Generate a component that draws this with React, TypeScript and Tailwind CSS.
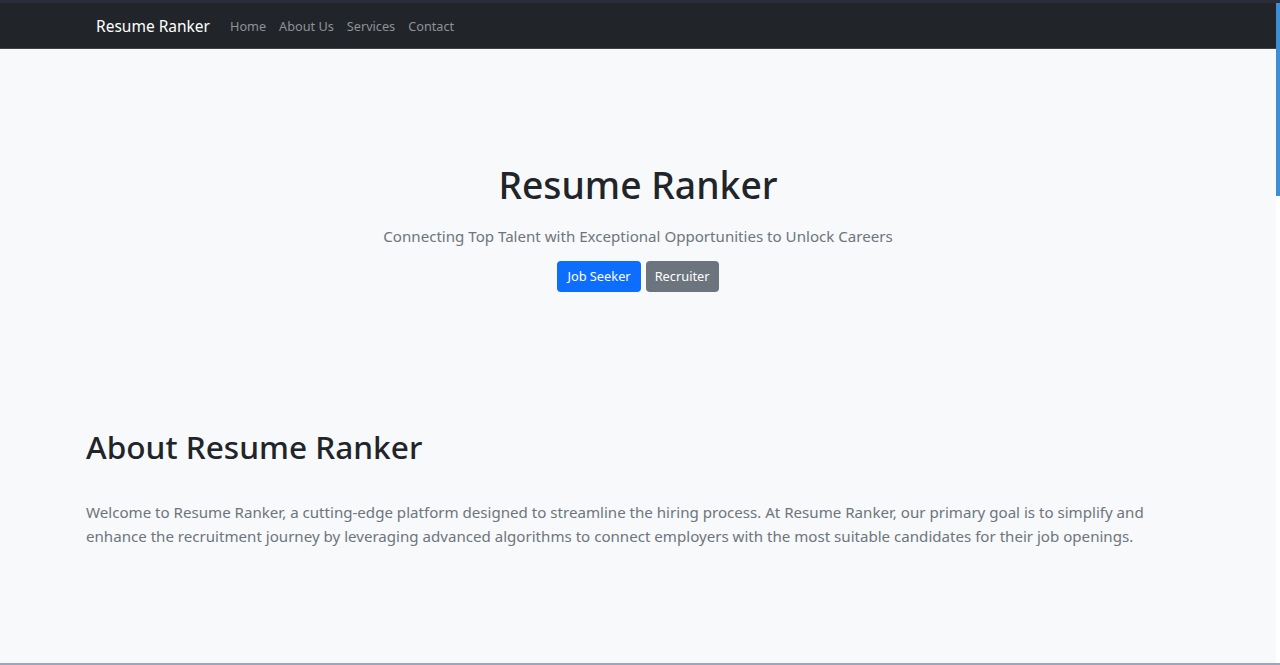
export default function App() {
  return (
    <div
      className="h-[665px] w-[1280px] overflow-hidden flex flex-col bg-[#f8f9fa]"
      style={{ fontFamily: '"Noto Sans", "Open Sans", sans-serif' }}
    >
      <div className="h-[3px] bg-[#2b2c3a]" />
      <div className="flex flex-1 min-h-0">
        <div className="flex-1 flex flex-col">
          <nav className="h-[46px] bg-[#212529] border-b border-[#3d4046] flex items-center pl-[96px] pt-[3px]">
            <span className="text-[15.5px] text-white mr-[20px]">Resume Ranker</span>
            <div className="flex gap-[13px] text-[12.7px] text-[#8f9296]">
              <a>Home</a>
              <a>About Us</a>
              <a>Services</a>
              <a>Contact</a>
            </div>
          </nav>

          <section className="flex flex-col items-center pt-[112px]">
            <h1 className="text-[37.3px] leading-[48px] font-medium text-[#212529]">Resume Ranker</h1>
            <p className="mt-[15px] text-[15.1px] leading-[24px] text-[#6c757d]">
              Connecting Top Talent with Exceptional Opportunities to Unlock Careers
            </p>
            <div className="mt-[13px] flex gap-[5px]">
              <button className="h-[31px] px-[10px] rounded-[4px] bg-[#0d6efd] text-white text-[12.8px]">Job Seeker</button>
              <button className="h-[31px] px-[9px] rounded-[4px] bg-[#6c757d] text-white text-[12.8px]">Recruiter</button>
            </div>
          </section>

          <section className="pl-[86px] pr-[100px] pt-[135px]">
            <h2 className="text-[31.6px] leading-[40px] font-medium text-[#212529]">About Resume Ranker</h2>
            <p className="mt-[33px] text-[15.1px] leading-[24px] text-[#6c757d]">
              Welcome to Resume Ranker, a cutting-edge platform designed to streamline the hiring process. At Resume Ranker, our primary goal is to simplify and enhance the recruitment journey by leveraging advanced algorithms to connect employers with the most suitable candidates for their job openings.
            </p>
          </section>
        </div>
        <div className="w-[4px] bg-white">
          <div className="h-[193px] bg-[#3a8fd6]" />
        </div>
      </div>
      <div className="h-[2px] bg-[#9ba5bd]" />
    </div>
  )
}
